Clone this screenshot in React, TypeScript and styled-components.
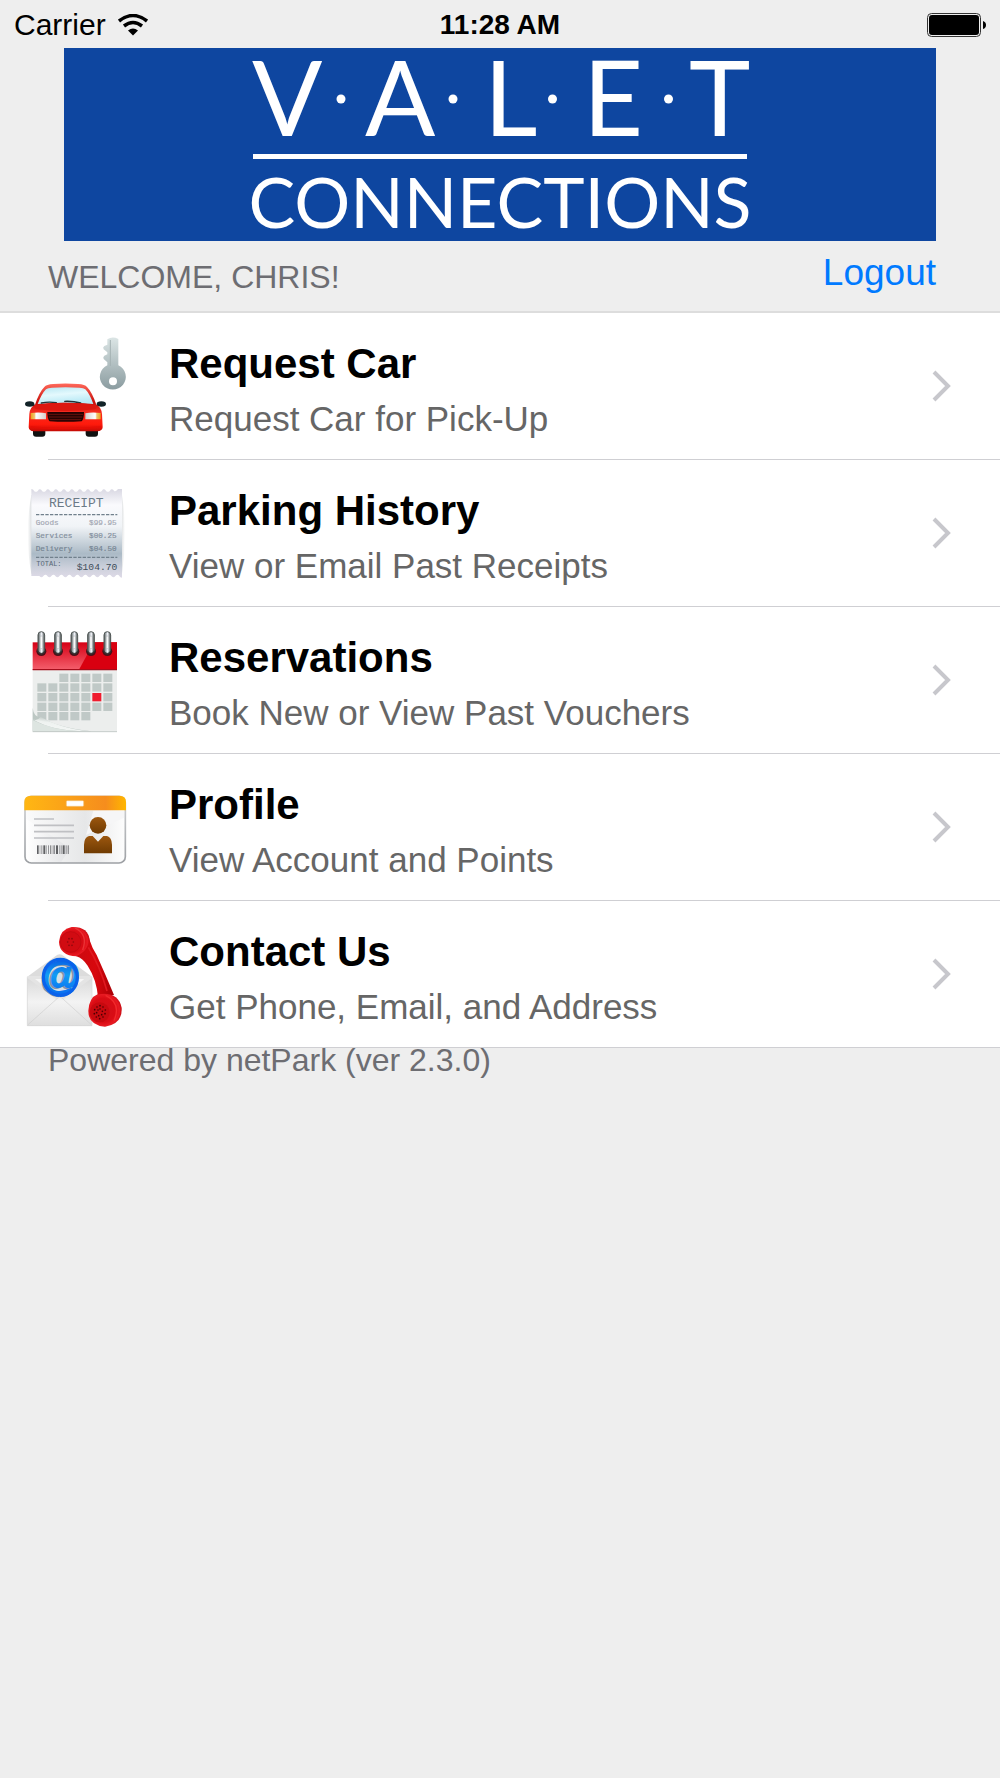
import React from "react";
import styled, { createGlobalStyle } from "styled-components";

const GlobalStyle = createGlobalStyle`
  * { box-sizing: border-box; }
  body {
    margin: 0;
    background: #eeeeee;
    font-family: "Helvetica Neue", "Liberation Sans", Arial, sans-serif;
    color: #000;
  }
`;

const Screen = styled.div`
  min-height: 100vh;
  background: #eeeeee;
`;

const StatusBar = styled.div`
  display: grid;
  grid-template-columns: 1fr auto 1fr;
  align-items: center;
  height: 48px;
  padding: 2px 14px 0;
  line-height: 32px;
`;

const Carrier = styled.div`
  display: flex;
  align-items: center;
  gap: 12px;
  font-size: 30px;
`;

const Clock = styled.time`
  font-size: 28px;
  font-weight: 700;
`;

const BatteryIcon = styled.svg`
  display: block;
  justify-self: end;
  width: 59px;
  height: 24px;
`;

const WifiIcon = styled.svg`
  display: block;
  width: 30px;
  height: 22px;
`;

const Banner = styled.div`
  margin: 0 64px;
  background: #0e46a0;
`;

const Logo = styled.svg`
  display: block;
  width: 100%;
  height: auto;
  overflow: visible;
  font-family: Lato, "Open Sans", sans-serif;
`;

const Greeting = styled.div`
  display: flex;
  justify-content: space-between;
  align-items: flex-start;
  padding: 8px 64px 6px 48px;
`;

const Welcome = styled.h1`
  margin: 0;
  font-size: 32px;
  line-height: 56px;
  font-weight: 400;
  text-transform: uppercase;
  color: #6d6d72;
`;

const LogoutButton = styled.button`
  padding: 0;
  border: 0;
  background: none;
  font-family: inherit;
  font-size: 37px;
  line-height: 48px;
  color: #007aff;
  cursor: pointer;
`;

const Menu = styled.ul`
  margin: 0;
  padding: 0;
  list-style: none;
  background: #fff;
  border-top: 2px solid #dddddd;
`;

const MenuItem = styled.li`
  &::after {
    content: "";
    display: block;
    height: 1px;
    margin-left: 48px;
    background: #cfcfd3;
  }
  &:last-child::after {
    margin-left: 0;
  }
`;

const MenuLink = styled.a`
  display: flex;
  align-items: center;
  min-height: 146px;
  padding: 0 48px 0 24px;
  color: inherit;
  text-decoration: none;
`;

const ItemIcon = styled.svg`
  display: block;
  flex: none;
  width: 104px;
  height: 104px;
  overflow: visible;
`;

const ItemText = styled.div`
  flex: 1;
  display: flex;
  flex-direction: column;
  gap: 8px;
  padding: 8px 0 0 41px;
`;

const ItemTitle = styled.span`
  font-size: 42px;
  line-height: 50px;
  font-weight: 700;
`;

const ItemDetail = styled.span`
  font-size: 35px;
  line-height: 44px;
  color: #666666;
`;

const Chevron = styled.svg`
  display: block;
  flex: none;
  width: 20px;
  height: 32px;
`;

const Footer = styled.footer`
  padding: 0 48px;
  font-size: 32px;
  line-height: 24px;
  color: #6d6d72;
`;

function CarIcon() {
  return (
    <ItemIcon viewBox="72 70 312 312" aria-hidden="true">
      <defs>
        <linearGradient id="keyFill" x1="0" y1="0" x2="0" y2="1">
          <stop offset="0" stopColor="#dbe5e5" />
          <stop offset="1" stopColor="#8b9ca0" />
        </linearGradient>
        <linearGradient id="carFill" x1="0" y1="0" x2="0" y2="1">
          <stop offset="0" stopColor="#ff6a5c" />
          <stop offset="0.4" stopColor="#c80d08" />
          <stop offset="0.6" stopColor="#f52c20" />
          <stop offset="0.85" stopColor="#ff1a0c" />
          <stop offset="1" stopColor="#c30a05" />
        </linearGradient>
        <linearGradient id="glassFill" x1="0" y1="0" x2="0.3" y2="1">
          <stop offset="0" stopColor="#b5e6f2" />
          <stop offset="0.5" stopColor="#e4f9fd" />
          <stop offset="1" stopColor="#b8e9f5" />
        </linearGradient>
        <linearGradient id="lampFill" x1="0" y1="0" x2="1" y2="0">
          <stop offset="0" stopColor="#e9a21b" />
          <stop offset="0.25" stopColor="#f0c470" />
          <stop offset="0.35" stopColor="#fff" />
          <stop offset="1" stopColor="#d5cfcb" />
        </linearGradient>
      </defs>
      <path
        fill="url(#keyFill)"
        fillRule="evenodd"
        d="M322 86Q337 76 355 85V164A39 38 0 1 1 322 164V155L311 145Q308 139 313 135L322 131V125L311 116Q307 110 313 106L322 102ZM339 200A12 12 0 1 0 339 224A12 12 0 1 0 339 200Z"
      />
      <path d="M331 88V166" stroke="#a4b1b3" strokeWidth="3" />
      <rect x="99" y="350" width="37" height="28" rx="9" fill="#111" />
      <rect x="257" y="350" width="37" height="28" rx="9" fill="#111" />
      <ellipse cx="89" cy="280" rx="14" ry="8" fill="#122328" />
      <ellipse cx="304" cy="280" rx="14" ry="8" fill="#122328" />
      <path d="M98 282l12 7M296 282l-12 7" stroke="#122328" strokeWidth="6" />
      <path
        fill="url(#carFill)"
        d="M105 282Q118 244 133 229Q139 221 160 220Q196 217 234 220Q255 221 261 229Q276 244 289 282Q305 290 306 310L308 350Q307 361 292 362H101Q87 361 86 350L88 310Q89 290 105 282Z"
      />
      <path fill="url(#glassFill)" d="M113 280Q125 249 138 236Q143 232 156 231Q196 228 238 231Q251 232 256 236Q269 249 280 280Q196 272 113 280Z" />
      <path d="M124 277Q146 272 169 276M194 272Q220 271 242 277" fill="none" stroke="#243438" strokeWidth="4" strokeLinecap="round" />
      <path d="M105 283Q196 269 289 283Q294 290 284 296Q196 306 110 296Q99 290 105 283Z" fill="#dc1710" />
      <path d="M92 307Q120 304 138 308V326H92Z" fill="url(#lampFill)" />
      <path d="M92 307Q120 304 138 308V326H92Z" fill="url(#lampFill)" transform="translate(394 0) scale(-1 1)" />
      <path d="M142 304H252Q252 325 245 332Q196 335 149 332Q142 325 142 304Z" fill="#240303" />
      <path d="M145 311H249M147 319H247M150 327H244" stroke="#8b1b14" strokeWidth="2" />
      <path d="M92 349Q196 359 302 349" fill="none" stroke="#e60e06" strokeWidth="4" />
    </ItemIcon>
  );
}

const receiptLines = [
  { name: "Goods", price: "$99.95", y: 191, color: "#a3a7b2" },
  { name: "Services", price: "$00.25", y: 231, color: "#828e9c" },
  { name: "Delivery", price: "$04.50", y: 270, color: "#738391" },
];

function ReceiptIcon() {
  return (
    <ItemIcon viewBox="72 60 312 312" aria-hidden="true">
      <defs>
        <linearGradient id="paper" x1="0" y1="0" x2="0" y2="1">
          <stop offset="0" stopColor="#d9d8e3" />
          <stop offset="0.18" stopColor="#fafafd" />
          <stop offset="0.42" stopColor="#f1f4f7" />
          <stop offset="0.73" stopColor="#abbac6" />
          <stop offset="0.9" stopColor="#cfd2dd" />
          <stop offset="1" stopColor="#dedae7" />
        </linearGradient>
        <linearGradient id="paperShade" x1="0" y1="0" x2="1" y2="0">
          <stop offset="0" stopColor="#fff" />
          <stop offset="0.06" stopColor="#c9cdd0" />
          <stop offset="0.94" stopColor="#c9cdd0" />
          <stop offset="1" stopColor="#fff" />
        </linearGradient>
      </defs>
      <path d="M94 102Q72 218 94 338H366Q384 218 366 102Z" fill="url(#paperShade)" />
      <path
        fill="url(#paper)"
        d="M94 84q6 0 8 5q5 7 12 0q5-8 12 0q5 7 12 0q5-8 12 0q5 7 12 0q5-8 12 0q5 7 12 0q5-8 12 0q5 7 12 0q5-8 12 0q5 7 12 0q5-8 12 0q5 7 12 0q5-8 12 0q5 7 12 0q5-8 12 0q5 7 12 0q5-8 12 0q5 7 12 0q5-8 12 0q4 5 12-5h12V350q-6 0-8-5q-5-7-12 0q-5 8-12 0q-5-7-12 0q-5 8-12 0q-5-7-12 0q-5 8-12 0q-5-7-12 0q-5 8-12 0q-5-7-12 0q-5 8-12 0q-5-7-12 0q-5 8-12 0q-5-7-12 0q-5 8-12 0q-5-7-12 0q-5 8-12 0q-5-7-12 0q-5 8-12 0q-5-7-12 0q-5 8-12 0H94Z"
      />
      <g fontFamily="'Liberation Mono', monospace">
        <text x="147" y="139" fontSize="39" fill="#6c7b87">RECEIPT</text>
        {receiptLines.map((line) => (
          <g key={line.name} fontSize="23" fill={line.color} stroke={line.color} strokeWidth="0.5">
            <text x="107" y={line.y}>{line.name}</text>
            <text x="350" y={line.y} textAnchor="end">{line.price}</text>
          </g>
        ))}
        <text x="109" y="314" fontSize="21" fill="#566674">TOTAL:</text>
        <text x="352" y="326" fontSize="29" fill="#3e4e5b" textAnchor="end">$104.70</text>
      </g>
      <path d="M108 161H352M108 289H352" stroke="#71808c" strokeWidth="4" strokeDasharray="10 4" />
    </ItemIcon>
  );
}

const calendarRows = [
  { y: 188, from: 2, to: 6 },
  { y: 217, from: 0, to: 6 },
  { y: 246, from: 0, to: 6 },
  { y: 275, from: 0, to: 6 },
  { y: 303, from: 0, to: 4 },
];

function CalendarIcon() {
  return (
    <ItemIcon viewBox="72 51 312 312" aria-hidden="true">
      <defs>
        <linearGradient id="calHead" x1="0" y1="0" x2="0" y2="1">
          <stop offset="0" stopColor="#d50015" />
          <stop offset="1" stopColor="#f5606d" />
        </linearGradient>
        <linearGradient id="ring" x1="0" y1="0" x2="1" y2="0">
          <stop offset="0" stopColor="#4b514f" />
          <stop offset="0.3" stopColor="#aeb5b8" />
          <stop offset="0.55" stopColor="#f7f8ff" />
          <stop offset="0.8" stopColor="#8b9293" />
          <stop offset="1" stopColor="#454b49" />
        </linearGradient>
        <linearGradient id="curl" x1="0" y1="1" x2="0.5" y2="0">
          <stop offset="0" stopColor="#f8faf9" />
          <stop offset="0.6" stopColor="#eef2f0" />
          <stop offset="1" stopColor="#a9b5b1" />
        </linearGradient>
      </defs>
      <rect x="98" y="175" width="253" height="187" fill="#eceeed" />
      <rect x="98" y="94" width="253" height="83" fill="url(#calHead)" />
      <path d="M282 94H351V174H238Z" fill="#d90010" />
      <path d="M98 176H351" stroke="#a50d1b" strokeWidth="4" />
      {calendarRows.map((row) =>
        Array.from({ length: row.to - row.from + 1 }, (_, i) => {
          const col = row.from + i;
          const today = row.y === 246 && col === 5;
          return <rect key={`${row.y}-${col}`} x={112 + col * 33} y={row.y} width="27" height="25" fill={today ? "#ef1c2e" : "#c0c9c7"} />;
        })
      )}
      <path d="M98 290Q101 318 121 318Q170 349 275 361H98Z" fill="#bcc7c3" />
      <path d="M98 325Q112 331 122 317Q176 350 270 361Q160 363 98 325Z" fill="url(#curl)" />
      <path d="M98 327Q155 357 240 361H98Z" fill="#dde5e1" />
      <path d="M98 362H351" stroke="#adb8b4" strokeWidth="2" />
      {[124, 174, 223, 273, 322].map((x) => (
        <g key={x}>
          <ellipse cx={x} cy="121" rx="15" ry="14" fill="#4a1018" />
          <rect x={x - 10} y="62" width="20" height="65" rx="10" fill="url(#ring)" stroke="#505756" strokeWidth="3" />
          <rect x={x - 3} y="75" width="6" height="38" rx="3" fill="#fff" stroke="#8b9092" strokeWidth="1" />
          <path d={`M${x - 11} 120Q${x} 139 ${x + 11} 120`} fill="none" stroke="#333" strokeWidth="4" />
        </g>
      ))}
    </ItemIcon>
  );
}

const barcode = [5, 2, 3, 6, 2, 3, 2, 2, 5, 6, 2, 3, 6, 3, 4];

function ProfileIcon() {
  let x = 111;
  return (
    <ItemIcon viewBox="72 42 312 312" aria-hidden="true">
      <defs>
        <linearGradient id="cardHead" x1="0" y1="0" x2="1" y2="0">
          <stop offset="0" stopColor="#ffb713" />
          <stop offset="0.8" stopColor="#f68d1d" />
          <stop offset="1" stopColor="#ffb600" />
        </linearGradient>
        <linearGradient id="cardBody" x1="0" y1="0" x2="1" y2="0">
          <stop offset="0" stopColor="#fbfbfb" />
          <stop offset="0.6" stopColor="#e6e7e8" />
          <stop offset="1" stopColor="#fdfdfd" />
        </linearGradient>
        <linearGradient id="cardGloss" x1="0" y1="0" x2="1" y2="0">
          <stop offset="0" stopColor="#fff" />
          <stop offset="1" stopColor="#e1e2e4" />
        </linearGradient>
        <linearGradient id="cardEdge" x1="0" y1="0" x2="0" y2="1">
          <stop offset="0" stopColor="#d0d2d4" />
          <stop offset="1" stopColor="#9da0a4" />
        </linearGradient>
        <linearGradient id="person" x1="0" y1="0" x2="0" y2="1">
          <stop offset="0" stopColor="#9c570f" />
          <stop offset="1" stopColor="#6f3b02" />
        </linearGradient>
      </defs>
      <rect x="75" y="106" width="301" height="200" rx="19" fill="url(#cardBody)" stroke="url(#cardEdge)" strokeWidth="5" />
      <path d="M79 174L210 262L184 302H94Q79 300 79 287Z" fill="url(#cardGloss)" />
      <path d="M280 149L258 222L372 170V149Z" fill="#f6f6f7" />
      <path d="M73 148V123Q73 104 93 104H358Q378 104 378 123V148Z" fill="url(#cardHead)" />
      <rect x="199" y="119" width="52" height="17" rx="3" fill="#fff" stroke="#f3c176" strokeWidth="2" />
      <path d="M102 174H162M102 193H222M102 212H222M102 231H222" stroke="#bfc0c3" strokeWidth="5" />
      {barcode.map((w, i) => {
        const left = x;
        x += w + 3;
        return <rect key={i} x={left} y="253" width={w} height="26" fill={i % 3 === 0 ? "#606164" : "#929396"} />;
      })}
      <circle cx="294" cy="193" r="25" fill="url(#person)" />
      <path d="M252 277V251Q253 228 267 225H278L294 242L310 225H321Q335 228 336 251V277Z" fill="url(#person)" />
    </ItemIcon>
  );
}

const mouthpiece = [
  [300, 299], [309, 303], [316, 312], [315, 323], [309, 333], [299, 338], [289, 333], [283, 323],
  [284, 311], [291, 303], [300, 309], [307, 316], [305, 326], [296, 329], [290, 320], [294, 312],
];

const earpiece = [[207, 98], [216, 98], [220, 108], [216, 118], [207, 118], [203, 108]];

function ContactIcon() {
  return (
    <ItemIcon viewBox="72 48 312 312" aria-hidden="true">
      <defs>
        <linearGradient id="handset" x1="0" y1="0" x2="1" y2="0">
          <stop offset="0" stopColor="#c90b10" />
          <stop offset="0.55" stopColor="#d8070d" />
          <stop offset="1" stopColor="#a80005" />
        </linearGradient>
        <radialGradient id="knob" cx="0.45" cy="0.5" r="0.6">
          <stop offset="0" stopColor="#cf1019" />
          <stop offset="0.6" stopColor="#d90c14" />
          <stop offset="0.8" stopColor="#e81a22" />
          <stop offset="1" stopColor="#ad0007" />
        </radialGradient>
        <linearGradient id="envelope" x1="0" y1="0" x2="0" y2="1">
          <stop offset="0" stopColor="#d9d9d9" />
          <stop offset="0.5" stopColor="#f3f3f3" />
          <stop offset="1" stopColor="#dedede" />
        </linearGradient>
        <linearGradient id="at" x1="0" y1="0" x2="0" y2="1">
          <stop offset="0" stopColor="#0549dd" />
          <stop offset="0.5" stopColor="#129cf5" />
          <stop offset="1" stopColor="#0867ee" />
        </linearGradient>
      </defs>
      <path d="M82 212L166 151Q179 139 192 151L276 212Z" fill="#dcdcdc" />
      <rect x="82" y="211" width="194" height="149" fill="#e4e4e4" />
      <path d="M105 219H253L180 277Z" fill="#f6f6f6" />
      <ellipse cx="178" cy="216" rx="48" ry="52" fill="#d5dfe8" />
      <g fontFamily="'Liberation Sans', sans-serif" fontWeight="700" fontStyle="italic" fontSize="116" textAnchor="middle">
        <text x="176" y="251" fill="#8695a4" stroke="#8695a4" strokeWidth="6">@</text>
        <text x="181" y="248" fill="url(#at)" stroke="url(#at)" strokeWidth="6">@</text>
      </g>
      <ellipse cx="181" cy="214" rx="51" ry="54" fill="none" stroke="#0b62ea" strokeWidth="10" />
      <path d="M82 216L169 280Q179 268 190 280L276 216V360H82Z" fill="url(#envelope)" />
      <path d="M84 356L169 280Q179 268 190 280L274 356" fill="none" stroke="#cfcfcf" strokeWidth="2" />
      <path d="M82 212V359H276V212" fill="none" stroke="#d6d6d6" strokeWidth="2" />
      <path d="M218 65Q263 67 269 103Q276 126 290 147Q317 207 342 267L294 274Q290 221 263 179Q248 157 229 151Z" fill="url(#handset)" />
      <path d="M265 124Q300 180 321 255" fill="none" stroke="#e01a20" strokeWidth="5" />
      <path d="M215 63Q265 61 269 103Q263 135 230 151Q178 148 177 107Q181 69 215 63Z" fill="url(#knob)" />
      <path d="M225 66Q265 85 248 132" fill="none" stroke="#ea3336" strokeWidth="4" />
      <circle cx="212" cy="108" r="31" fill="#d10b12" stroke="#bb0910" strokeWidth="2" />
      <path d="M293 265Q354 255 365 305Q368 354 315 362Q265 358 265 315Q267 275 293 265Z" fill="url(#knob)" />
      <path d="M317 268Q365 292 342 344" fill="none" stroke="#f02a2c" strokeWidth="4" />
      <circle cx="299" cy="319" r="30" fill="#c8090f" />
      {mouthpiece.map(([cx, cy]) => <circle key={`${cx}-${cy}`} cx={cx} cy={cy} r="2.5" fill="#480004" />)}
      {earpiece.map(([cx, cy]) => <circle key={`${cx}-${cy}`} cx={cx} cy={cy} r="2.5" fill="#8a080c" />)}
    </ItemIcon>
  );
}

const items = [
  { title: "Request Car", detail: "Request Car for Pick-Up", Icon: CarIcon, href: "#request" },
  { title: "Parking History", detail: "View or Email Past Receipts", Icon: ReceiptIcon, href: "#history" },
  { title: "Reservations", detail: "Book New or View Past Vouchers", Icon: CalendarIcon, href: "#reservations" },
  { title: "Profile", detail: "View Account and Points", Icon: ProfileIcon, href: "#profile" },
  { title: "Contact Us", detail: "Get Phone, Email, and Address", Icon: ContactIcon, href: "#contact" },
];

export default function App() {
  return (
    <Screen>
      <GlobalStyle />
      <StatusBar>
        <Carrier>
          Carrier
          <WifiIcon viewBox="0 0 30 22" aria-hidden="true">
            <path d="M1 7Q15 -4 29 7M6 12Q15 5 24 12" fill="none" stroke="#000" strokeWidth="3.5" />
            <path d="M10 16.5Q15 12.5 20 16.5L15 21.5Z" />
          </WifiIcon>
        </Carrier>
        <Clock>11:28 AM</Clock>
        <BatteryIcon viewBox="0 0 59 24" aria-hidden="true">
          <rect x="0.5" y="0.5" width="53" height="23" rx="4" fill="none" stroke="#333" />
          <rect x="2" y="2" width="50" height="20" rx="3" />
          <path d="M56 8Q59 9 59 12T56 16Z" />
        </BatteryIcon>
      </StatusBar>
      <Banner>
        <Logo viewBox="0 0 872 193" role="img" aria-label="Valet Connections">
          <g fill="#fff">
            <text x="188 301 420 519 625" y="88" fontSize="104">VALET</text>
            <circle cx="277" cy="51" r="4.5" />
            <circle cx="389" cy="51" r="4.5" />
            <circle cx="488.5" cy="51" r="4.5" />
            <circle cx="604.5" cy="51" r="4.5" />
            <rect x="189" y="106" width="494" height="5" />
            <text x="436" y="180" fontSize="70" textAnchor="middle">CONNECTIONS</text>
          </g>
        </Logo>
      </Banner>
      <Greeting>
        <Welcome>Welcome, Chris!</Welcome>
        <LogoutButton type="button">Logout</LogoutButton>
      </Greeting>
      <Menu>
        {items.map(({ title, detail, Icon, href }) => (
          <MenuItem key={title}>
            <MenuLink href={href}>
              <Icon />
              <ItemText>
                <ItemTitle>{title}</ItemTitle>
                <ItemDetail>{detail}</ItemDetail>
              </ItemText>
              <Chevron viewBox="0 0 20 32" aria-hidden="true">
                <path d="M2 2L16 16L2 30" fill="none" stroke="#c7c7cc" strokeWidth="4" />
              </Chevron>
            </MenuLink>
          </MenuItem>
        ))}
      </Menu>
      <Footer>Powered by netPark (ver 2.3.0)</Footer>
    </Screen>
  );
}
